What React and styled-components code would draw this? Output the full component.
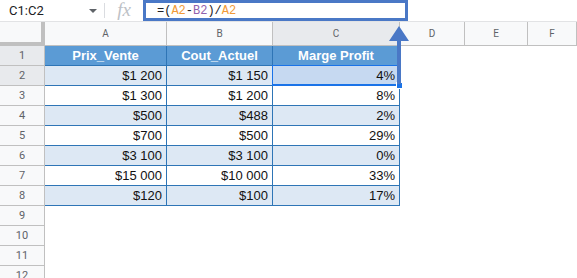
import React from "react";
import styled, { createGlobalStyle } from "styled-components";

const GlobalStyle = createGlobalStyle`
  html, body { margin: 0; padding: 0; background: #fff; }
  body { font-family: "Liberation Sans", Arial, sans-serif; overflow: hidden; }
  * { box-sizing: border-box; }
`;

const COLS = "45px 122px 106px 127px 65px 63px 1fr";
const BLUE_LINE = "#2e75b6";
const GRID_GRAY = "#c0c0c0";

const Sheet = styled.div`
  position: relative;
  width: 577px;
  height: 278px;
  overflow: hidden;
  background: #fff;
`;

const FormulaBar = styled.div`
  display: flex;
  align-items: stretch;
  height: 22px;
  border-bottom: 1px solid #e2e3e5;
`;

const NameBox = styled.div`
  width: 104px;
  display: flex;
  align-items: center;
  padding-left: 9px;
  padding-right: 7px;
  font-family: Roboto, "Liberation Sans", sans-serif;
  font-size: 13px;
  color: #202124;
`;

const Caret = styled.span`
  margin-left: auto;
  width: 0;
  height: 0;
  border-left: 4px solid transparent;
  border-right: 4px solid transparent;
  border-top: 4px solid #5f6368;
`;

const Divider = styled.div`
  width: 1px;
  background: #dadce0;
  margin: 3px 0;
`;

const FxLabel = styled.div`
  width: 38px;
  display: flex;
  align-items: center;
  justify-content: center;
  font-family: "Liberation Serif", serif;
  font-style: italic;
  font-size: 19px;
  color: #bdc1c6;
  padding-bottom: 2px;
`;

const FormulaInput = styled.div`
  width: 265px;
  border: 3px solid #4a78c6;
  display: flex;
  align-items: center;
  padding-left: 11px;
  font-family: "Liberation Mono", monospace;
  font-size: 12px;
  color: #202124;
  white-space: pre;
`;

const Ref = styled.span`
  color: ${(p) => (p.$tone === "b" ? "#9161ad" : "#f29b38")};
`;

const Row = styled.div`
  display: grid;
  grid-template-columns: ${COLS};
  height: ${(p) => (p.$head ? "24px" : "20px")};
`;

const Corner = styled.div`
  background: #f8f9fa;
  border-right: 4px solid ${GRID_GRAY};
  border-bottom: 4px solid ${GRID_GRAY};
`;

const ColHead = styled.div`
  display: flex;
  align-items: center;
  justify-content: center;
  background: ${(p) => (p.$active ? "#e8eaed" : "#f8f9fa")};
  border-right: 1px solid ${GRID_GRAY};
  border-bottom: 1px solid ${GRID_GRAY};
  font-family: Roboto, "Liberation Sans", sans-serif;
  font-size: 10px;
  color: #5f6368;
`;

const RowHead = styled.div`
  display: flex;
  align-items: center;
  justify-content: center;
  background: ${(p) => (p.$active ? "#e8eaed" : "#f8f9fa")};
  border-right: 1px solid ${GRID_GRAY};
  border-bottom: 1px solid ${GRID_GRAY};
  font-family: Roboto, "Liberation Sans", sans-serif;
  font-size: 11px;
  color: #5f6368;
`;

const fills = {
  head: "#5b9bd5",
  band: "#dde8f4",
  plain: "#ffffff",
  selected: "#c6d9f1",
};

const Cell = styled.div`
  position: relative;
  display: flex;
  align-items: center;
  justify-content: ${(p) => (p.$kind === "head" ? "center" : "flex-end")};
  padding: 0 4px;
  background: ${(p) => fills[p.$kind]};
  border-right: 1px solid ${BLUE_LINE};
  border-bottom: 1px solid ${BLUE_LINE};
  font-size: 13px;
  font-weight: ${(p) => (p.$kind === "head" ? 700 : 400)};
  color: ${(p) => (p.$kind === "head" ? "#ffffff" : "#111")};
  ${(p) =>
    p.$kind === "selected" &&
    `
    border-top: 1px solid #1a73e8;
    border-bottom: 2px solid #1a73e8;
    border-left: 1px solid #1a73e8;
    margin-top: -1px;
    margin-left: -1px;
  `}
`;

const Handle = styled.span`
  position: absolute;
  right: -4px;
  bottom: -5px;
  width: 7px;
  height: 7px;
  background: #1a73e8;
  border: 1px solid #fff;
  z-index: 2;
`;

const Blank = styled.div``;

const Arrow = styled.svg`
  position: absolute;
  left: 388px;
  top: 24px;
  z-index: 3;
`;

const data = [
  ["$1 200", "$1 150", "4%"],
  ["$1 300", "$1 200", "8%"],
  ["$500", "$488", "2%"],
  ["$700", "$500", "29%"],
  ["$3 100", "$3 100", "0%"],
  ["$15 000", "$10 000", "33%"],
  ["$120", "$100", "17%"],
];

export default function App() {
  return (
    <Sheet>
      <GlobalStyle />
      <FormulaBar>
        <NameBox>
          C1:C2
          <Caret />
        </NameBox>
        <Divider />
        <FxLabel>fx</FxLabel>
        <FormulaInput>
          =(<Ref>A2</Ref>-<Ref $tone="b">B2</Ref>)/<Ref>A2</Ref>
        </FormulaInput>
      </FormulaBar>

      <Row $head>
        <Corner />
        {["A", "B", "C", "D", "E", "F"].map((c) => (
          <ColHead key={c} $active={c === "C"}>
            {c}
          </ColHead>
        ))}
      </Row>

      <Row>
        <RowHead $active>1</RowHead>
        <Cell $kind="head">Prix_Vente</Cell>
        <Cell $kind="head">Cout_Actuel</Cell>
        <Cell $kind="head">Marge Profit</Cell>
        <Blank />
        <Blank />
        <Blank />
      </Row>

      {data.map((r, i) => {
        const n = i + 2;
        const kind = i % 2 === 0 ? "band" : "plain";
        return (
          <Row key={n}>
            <RowHead $active={n === 2}>{n}</RowHead>
            <Cell $kind={kind}>{r[0]}</Cell>
            <Cell $kind={kind}>{r[1]}</Cell>
            <Cell $kind={n === 2 ? "selected" : kind}>
              {r[2]}
              {n === 2 && <Handle />}
            </Cell>
            <Blank />
            <Blank />
            <Blank />
          </Row>
        );
      })}

      {[9, 10, 11, 12].map((n) => (
        <Row key={n}>
          <RowHead>{n}</RowHead>
        </Row>
      ))}

      <Arrow width="22" height="62" viewBox="0 0 22 62">
        <path d="M11 2 L21 17 L13 17 L13 60 L9 60 L9 17 L1 17 Z" fill="#4a78c6" />
      </Arrow>
    </Sheet>
  );
}
